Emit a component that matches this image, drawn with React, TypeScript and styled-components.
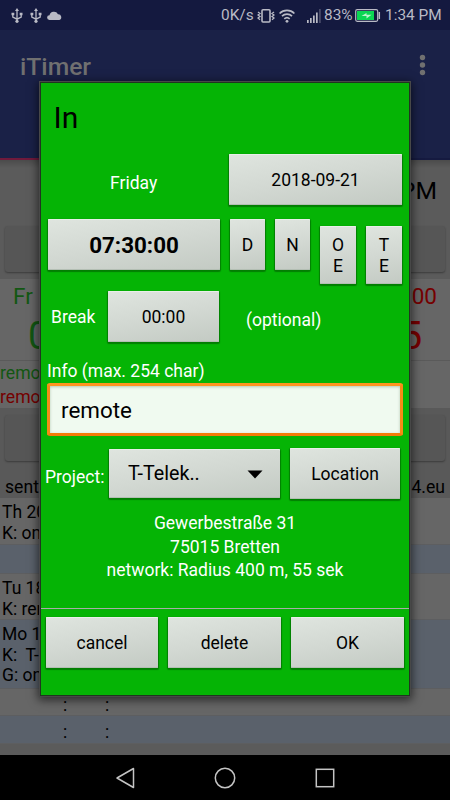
import React from 'react';
import styled, { createGlobalStyle } from 'styled-components';

const GlobalStyle = createGlobalStyle`
  * { box-sizing: border-box; }
  body { margin: 0; background: #000; }
`;

const Screen = styled.div`
  position: relative;
  width: 450px;
  height: 800px;
  overflow: hidden;
  display: flex;
  flex-direction: column;
  background: #5b5b5b;
  color: #000;
  font-family: Roboto, sans-serif;
  white-space: pre;
`;

/* System status bar */

const StatusBar = styled.header`
  flex: none;
  height: 30px;
  display: flex;
  align-items: center;
  justify-content: space-between;
  padding: 1px 10px 0 11px;
  background: #14193f;
  color: #b9bac5;
`;

const StatusGroup = styled.div`
  display: flex;
  align-items: center;
`;

const StatusText = styled.span<{ $w: number; $ml?: number }>`
  width: ${(p) => p.$w}px;
  margin-left: ${(p) => p.$ml ?? 0}px;
  font-size: 15.4px;
  line-height: 29px;
`;

const Glyph = styled.svg<{ $ml?: number }>`
  display: block;
  flex: none;
  margin-left: ${(p) => p.$ml ?? 0}px;
`;

/* App header */

const AppBar = styled.div`
  flex: none;
  height: 128px;
  display: flex;
  justify-content: space-between;
  align-items: flex-start;
  padding: 19px 22px 0 20px;
  background: #1a2147;
  color: #707070;
`;

const AppTitle = styled.h1`
  margin: 0;
  padding-top: 1px;
  font-size: 24.7px;
  line-height: 34px;
  font-weight: 500;
`;

const TabIndicator = styled.div`
  flex: none;
  height: 2px;
  background: linear-gradient(90deg, #701a3c 225px, #151a40 225px);
`;

/* Dimmed page */

const Panel = styled.section<{ $h: number; $tone?: string; $line?: boolean }>`
  flex: none;
  height: ${(p) => p.$h}px;
  background: ${(p) => p.$tone ?? '#666'};
  border-bottom: ${(p) => (p.$line ? '1px solid #5a5a5a' : '0')};
`;

const ClockPanel = styled(Panel)`
  display: flex;
  flex-direction: column;
  background: linear-gradient(#4b4b4b, #5b5b5b 8px);
`;

const Clock = styled.div`
  height: 66px;
  padding: 13px 13px 0 0;
  text-align: right;
  font-size: 24.7px;
  line-height: 36px;
`;

const DimButton = styled.div`
  height: 46px;
  margin: 0 5px;
  border-radius: 3px;
  background: #565656;
  box-shadow: 0 1px 2px rgba(0, 0, 0, 0.35);
`;

const Split = styled.div<{ $size: number; $lh: number; $pl?: number; $pr?: number }>`
  display: flex;
  justify-content: space-between;
  padding: 0 ${(p) => p.$pr ?? 0}px 0 ${(p) => p.$pl ?? 0}px;
  font-size: ${(p) => p.$size}px;
  line-height: ${(p) => p.$lh}px;
`;

const Tint = styled.span<{ $c: string }>`
  color: ${(p) => p.$c};
`;

const NoteLine = styled.div<{ $c: string }>`
  padding-top: 1px;
  color: ${(p) => p.$c};
  font-size: 17.6px;
  line-height: 23px;
`;

const SendPanel = styled(Panel)`
  padding-top: 7px;
  background: #595959;
`;

const LogEntry = styled(Panel)`
  padding: 4px 0 0 2px;
  font-size: 17.5px;
  line-height: 20.7px;
  border-bottom: 1px solid #5d5e60;
`;

const Colons = styled.div`
  display: grid;
  grid-template-columns: 42px 20px;
  padding: 2px 0 0 61px;
  line-height: 20px;
`;

/* System navigation */

const NavBar = styled.nav`
  flex: none;
  height: 45px;
  margin-top: auto;
  display: flex;
  justify-content: center;
  align-items: center;
  gap: 78px;
  background: #000;
`;

/* Dialog */

const Dialog = styled.main`
  position: absolute;
  left: 41px;
  top: 83px;
  width: 368px;
  height: 612px;
  display: flex;
  flex-direction: column;
  background: #05b405;
  box-shadow: 0 0 0 1px #203520, 0 0 0 2px #484848, 0 2px 9px 3px rgba(0, 0, 0, 0.6);
`;

const DialogTitle = styled.h2`
  flex: none;
  margin: 0;
  height: 71px;
  padding: 16px 0 0 12.5px;
  font-size: 30px;
  line-height: 37px;
  font-weight: 400;
`;

const Row = styled.div<{ $h: number; $pl: number; $gap?: number }>`
  flex: none;
  display: flex;
  align-items: flex-start;
  height: ${(p) => p.$h}px;
  padding-left: ${(p) => p.$pl}px;
  gap: ${(p) => p.$gap ?? 0}px;
`;

const Label = styled.span<{ $w?: number; $mt?: number; $ml?: number }>`
  flex: none;
  width: ${(p) => (p.$w ? `${p.$w}px` : 'auto')};
  margin-top: ${(p) => p.$mt ?? 0}px;
  margin-left: ${(p) => p.$ml ?? 0}px;
  color: #fff;
  font-size: 17.5px;
  line-height: 24px;
`;

const Button = styled.button<{ $w: number; $h?: number; $mt?: number; $big?: boolean }>`
  flex: none;
  display: flex;
  align-items: center;
  justify-content: center;
  width: ${(p) => p.$w}px;
  height: ${(p) => p.$h ?? 51}px;
  margin: ${(p) => p.$mt ?? 0}px 0 0;
  padding: 1px 0 0;
  border: 0;
  border-radius: 1px;
  background: linear-gradient(170deg, #dfe5df, #d2d8d2 50%, #c3cac3);
  box-shadow: inset 0 1px 0 #e9efe9, inset 0 -1px 0 #b3beb3, 0 1px 1px 1px rgba(0, 60, 0, 0.45);
  color: #000;
  font-family: inherit;
  font-size: ${(p) => (p.$big ? 22.4 : 17.5)}px;
  font-weight: ${(p) => (p.$big ? 700 : 400)};
  line-height: 20.5px;
  white-space: pre;
`;

const Spinner = styled(Button)`
  justify-content: space-between;
  padding: 1px 17px 0 19px;
  font-size: 19.7px;
`;

const Field = styled.div`
  flex: none;
  width: 356px;
  height: 53px;
  margin-left: 6px;
  padding-left: 11px;
  border: 3px solid;
  border-color: #ff9420 #f98a16 #f47b08;
  border-radius: 3px;
  background: #f0faf0;
  box-shadow: inset 0 1px 3px #b6c9b6;
  font-size: 22.4px;
  line-height: 49px;
`;

const Address = styled.p`
  flex: none;
  margin: 0;
  height: 96px;
  color: #fff;
  text-align: center;
  font-size: 17.5px;
  line-height: 23.7px;
`;

const Divider = styled.div`
  flex: none;
  height: 1px;
  margin-bottom: 8px;
  background: #a9aca9;
`;

const UsbIcon = ({ ml = 0 }: { ml?: number }) => (
  <Glyph $ml={ml} width="12" height="16" viewBox="0 0 12 16" fill="none" stroke="#b9bac5" strokeWidth="1.3">
    <path d="M6 2v11M1.8 6v3l4.2 2.2 4.2-2.2V6" />
    <path d="M6 0l2 3H4zM.5 4.8h2.8v2.5H.5zM8.7 4.8h2.8v2.5H8.7z" fill="#b9bac5" stroke="none" />
    <circle cx="6" cy="13.3" r="1.6" fill="#b9bac5" stroke="none" />
  </Glyph>
);

export default function App() {
  return (
    <>
      <GlobalStyle />
      <Screen>
        <StatusBar>
          <StatusGroup>
            <UsbIcon />
            <UsbIcon ml={7} />
            <Glyph $ml={5} width="15" height="10" viewBox="0 0 15 10" fill="#b9bac5">
              <path d="M2.500 9A2.300 2.300 0 0 1 2.500 4.200 4.600 4.600 0 0 1 11 3.200 3 3 0 0 1 12.300 9z" />
            </Glyph>
          </StatusGroup>
          <StatusGroup>
            <StatusText $w={36}>0K/s</StatusText>
            <Glyph width="18" height="16" viewBox="0 0 18 16" fill="none" stroke="#b9bac5" strokeWidth="1.6">
              <rect x="5" y="1.7" width="8" height="12.3" rx="1" />
              <path d="M1 4l2 1.5L1 7l2 1.5L1 10l2 1.7M17 4l-2 1.5L17 7l-2 1.5 2 1.5-2 1.7" strokeWidth="1.3" />
            </Glyph>
            <Glyph $ml={4} width="16" height="14" viewBox="0 0 16 14" fill="none" stroke="#b9bac5" strokeWidth="1.7">
              <path d="M.6 4.500a10.500 10.500 0 0 1 14.800 0M3 7.200a7.200 7.200 0 0 1 10 0M5.300 9.800a4 4 0 0 1 5.400 0" />
              <circle cx="8" cy="12.300" r="1.400" fill="#b9bac5" stroke="none" />
            </Glyph>
            <Glyph $ml={12} width="15" height="14" viewBox="0 0 15 14" fill="#b9bac5">
              <path d="M0 11h1.700v3H0zM3 9h1.700v5H3zM6 6.500h1.700V14H6zM9 3.500h1.700V14H9z" />
              <path d="M12 0h1.800v14H12z" fill="#484b69" />
            </Glyph>
            <StatusText $w={29} $ml={2}>83%</StatusText>
            <Glyph $ml={2} width="26" height="13" viewBox="0 0 26 13">
              <rect x=".7" y=".7" width="22" height="11.600" rx="1.500" fill="none" stroke="#b9bac5" strokeWidth="1.200" />
              <rect x="2" y="2" width="17" height="9" fill="#0bd653" />
              <path d="M6.500 7l5-3v1.800h5L11.500 9.500V7z" fill="#b9f3cc" />
              <path d="M24.300 3v7" stroke="#b9bac5" strokeWidth="1.500" />
            </Glyph>
            <StatusText $w={55} $ml={4}>1:34 PM</StatusText>
          </StatusGroup>
        </StatusBar>

        <AppBar>
          <AppTitle>iTimer</AppTitle>
          <Glyph width="11" height="34" viewBox="0 0 11 34" fill="#707070">
            <circle cx="5.500" cy="8.500" r="2.700" />
            <circle cx="5.500" cy="16" r="2.700" />
            <circle cx="5.500" cy="23.500" r="2.700" />
          </Glyph>
        </AppBar>
        <TabIndicator />

        <ClockPanel $h={119}>
          <Clock>PM</Clock>
          <DimButton />
        </ClockPanel>
        <Panel $h={82} $line>
          <Split $size={22.5} $lh={35} $pl={13} $pr={13}>
            <Tint $c="#125712">Fr</Tint>
            <Tint $c="#750000">00</Tint>
          </Split>
          <Split $size={38} $lh={44} $pl={28} $pr={28}>
            <Tint $c="#125712">0</Tint>
            <Tint $c="#750000">5</Tint>
          </Split>
        </Panel>
        <Panel $h={47}>
          <NoteLine $c="#125712">remo</NoteLine>
          <NoteLine $c="#750000">remo</NoteLine>
        </Panel>
        <SendPanel $h={90}>
          <DimButton />
          <Split $size={17.6} $lh={52} $pl={5} $pr={5}>
            <span>sent</span>
            <span>4.eu</span>
          </Split>
        </SendPanel>
        <LogEntry $h={47}>{'Th 20\nK: on'}</LogEntry>
        <LogEntry $h={29} $tone="#5a616b" />
        <LogEntry $h={46}>{'Tu 18\nK: rer'}</LogEntry>
        <LogEntry $h={69} $tone="#5a616b">{'Mo 1\nK:  T-\nG: on'}</LogEntry>
        <LogEntry $h={27}>
          <Colons><span>:</span><span>:</span></Colons>
        </LogEntry>
        <LogEntry $h={28} $tone="#5a616b">
          <Colons><span>:</span><span>:</span></Colons>
        </LogEntry>

        <NavBar>
          <Glyph width="22" height="22" viewBox="0 0 22 22" fill="none" stroke="#c4c4c4" strokeWidth="1.500" strokeLinejoin="round">
            <path d="M19.500 1.500v19L3 11z" />
          </Glyph>
          <Glyph width="22" height="22" viewBox="0 0 22 22" fill="none" stroke="#c4c4c4" strokeWidth="1.500">
            <circle cx="11" cy="11" r="9.700" />
          </Glyph>
          <Glyph width="22" height="22" viewBox="0 0 22 22" fill="none" stroke="#c4c4c4" strokeWidth="1.500">
            <rect x="2.300" y="2.300" width="17.400" height="17.400" />
          </Glyph>
        </NavBar>

        <Dialog>
          <DialogTitle>In</DialogTitle>
          <Row $h={65} $pl={69}>
            <Label $w={119} $mt={17}>Friday</Label>
            <Button $w={173}>2018-09-21</Button>
          </Row>
          <Row $h={72} $pl={7} $gap={10}>
            <Button $w={172} $big>07:30:00</Button>
            <Button $w={35}>D</Button>
            <Button $w={35}>N</Button>
            <Button $w={36} $h={58} $mt={7}>{'O\nE'}</Button>
            <Button $w={36} $h={58} $mt={7}>{'T\nE'}</Button>
          </Row>
          <Row $h={68} $pl={10}>
            <Label $w={57} $mt={14}>Break</Label>
            <Button $w={111}>00:00</Button>
            <Label $ml={27} $mt={17}>(optional)</Label>
          </Row>
          <Row $h={24} $pl={6}>
            <Label>Info (max. 254 char)</Label>
          </Row>
          <Field>remote</Field>
          <Row $h={76} $pl={4}>
            <Label $w={64} $mt={29}>Project:</Label>
            <Spinner $w={171} $h={49} $mt={13}>
              T-Telek..
              <Glyph width="16" height="9" viewBox="0 0 16 9"><path d="M.500.500h15L8 8.500z" /></Glyph>
            </Spinner>
            <Row $h={64} $pl={10}>
              <Button $w={110} $mt={12}>Location</Button>
            </Row>
          </Row>
          <Address>{'Gewerbestraße 31\n75015 Bretten\nnetwork: Radius 400 m, 55 sek'}</Address>
          <Divider />
          <Row $h={78} $pl={5} $gap={10}>
            <Button $w={112}>cancel</Button>
            <Button $w={113}>delete</Button>
            <Button $w={113}>OK</Button>
          </Row>
        </Dialog>
      </Screen>
    </>
  );
}
